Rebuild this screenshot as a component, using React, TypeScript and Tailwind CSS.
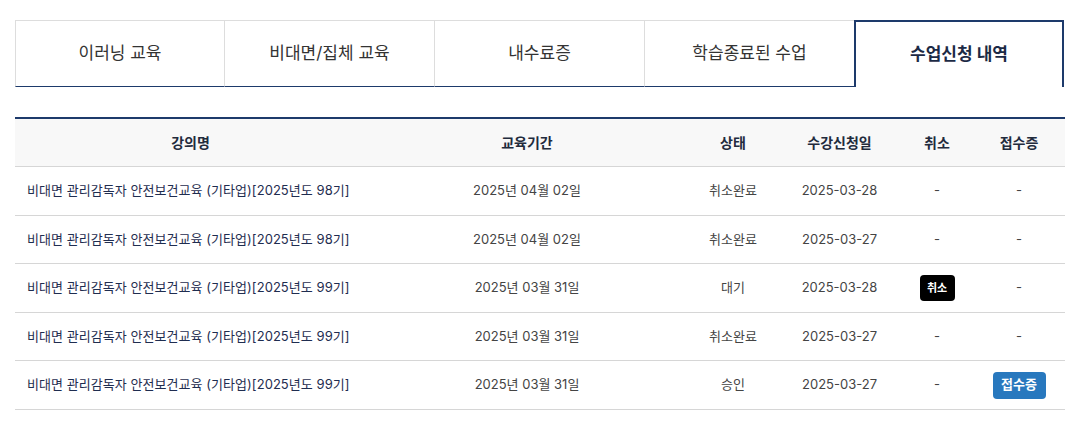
import React from "react";

const tabs = ["이러닝 교육", "비대면/집체 교육", "내수료증", "학습종료된 수업", "수업신청 내역"];

type Row = { title: string; period: string; status: string; date: string; cancel: boolean; receipt: boolean };

const rows: Row[] = [
  { title: "비대면 관리감독자 안전보건교육 (기타업)[2025년도 98기]", period: "2025년 04월 02일", status: "취소완료", date: "2025-03-28", cancel: false, receipt: false },
  { title: "비대면 관리감독자 안전보건교육 (기타업)[2025년도 98기]", period: "2025년 04월 02일", status: "취소완료", date: "2025-03-27", cancel: false, receipt: false },
  { title: "비대면 관리감독자 안전보건교육 (기타업)[2025년도 99기]", period: "2025년 03월 31일", status: "대기", date: "2025-03-28", cancel: true, receipt: false },
  { title: "비대면 관리감독자 안전보건교육 (기타업)[2025년도 99기]", period: "2025년 03월 31일", status: "취소완료", date: "2025-03-27", cancel: false, receipt: false },
  { title: "비대면 관리감독자 안전보건교육 (기타업)[2025년도 99기]", period: "2025년 03월 31일", status: "승인", date: "2025-03-27", cancel: false, receipt: true },
];

export default function App() {
  return (
    <div
      className="w-[1079px] h-[421px] bg-white px-[15px] pt-[20px]"
      style={{ fontFamily: 'Inter, "Noto Sans CJK KR", "Noto Sans", sans-serif' }}
    >
      <div className="w-[1050px]">
        {/* Tabs */}
        <div className="flex h-[67px]">
          {tabs.map((t, i) => {
            const active = i === tabs.length - 1;
            return active ? (
              <div
                key={t}
                className="w-[210px] flex items-center justify-center border-t-2 border-x-2 border-[#1d3a6b] text-[17px] font-bold text-[#1c2a45]"
              >
                {t}
              </div>
            ) : (
              <div
                key={t}
                className={`${i === 0 ? "w-[209px]" : "w-[210px]"} flex items-center justify-center border-t border-l border-t-[#dddddd] border-l-[#dddddd] border-b border-b-[#1d3a6b] text-[17px] text-[#333333]`}
              >
                {t}
              </div>
            );
          })}
        </div>

        {/* Table */}
        <div className="mt-[30px] border-t-2 border-[#1d3a6b]">
          <div className="flex h-[48px] bg-[#f8f8f8] border-b border-[#d6d6d6] text-[14px] font-bold text-[#222b3d]">
            <div className="w-[351px] flex items-center justify-center">강의명</div>
            <div className="w-[322px] flex items-center justify-center">교육기간</div>
            <div className="w-[90px] flex items-center justify-center">상태</div>
            <div className="w-[123px] flex items-center justify-center">수강신청일</div>
            <div className="w-[72px] flex items-center justify-center">취소</div>
            <div className="w-[92px] flex items-center justify-center">접수증</div>
          </div>
          {rows.map((r, i) => (
            <div key={i} className="flex h-[48.6px] border-b border-[#d6d6d6] text-[13px] text-[#444444]">
              <div className="w-[351px] flex items-center pl-[12px] text-[#1f2d50] tracking-[0.05px]">{r.title}</div>
              <div className="w-[322px] flex items-center justify-center">{r.period}</div>
              <div className="w-[90px] flex items-center justify-center">{r.status}</div>
              <div className="w-[123px] flex items-center justify-center">{r.date}</div>
              <div className="w-[72px] flex items-center justify-center">
                {r.cancel ? (
                  <span className="inline-flex items-center justify-center w-[35px] h-[26px] rounded-[4px] bg-black text-white text-[11px] font-bold">취소</span>
                ) : (
                  "-"
                )}
              </div>
              <div className="w-[92px] flex items-center justify-center">
                {r.receipt ? (
                  <span className="inline-flex items-center justify-center w-[53px] h-[27px] rounded-[4px] bg-[#2878be] text-white text-[13px] font-bold">접수증</span>
                ) : (
                  "-"
                )}
              </div>
            </div>
          ))}
        </div>
      </div>
    </div>
  );
}
